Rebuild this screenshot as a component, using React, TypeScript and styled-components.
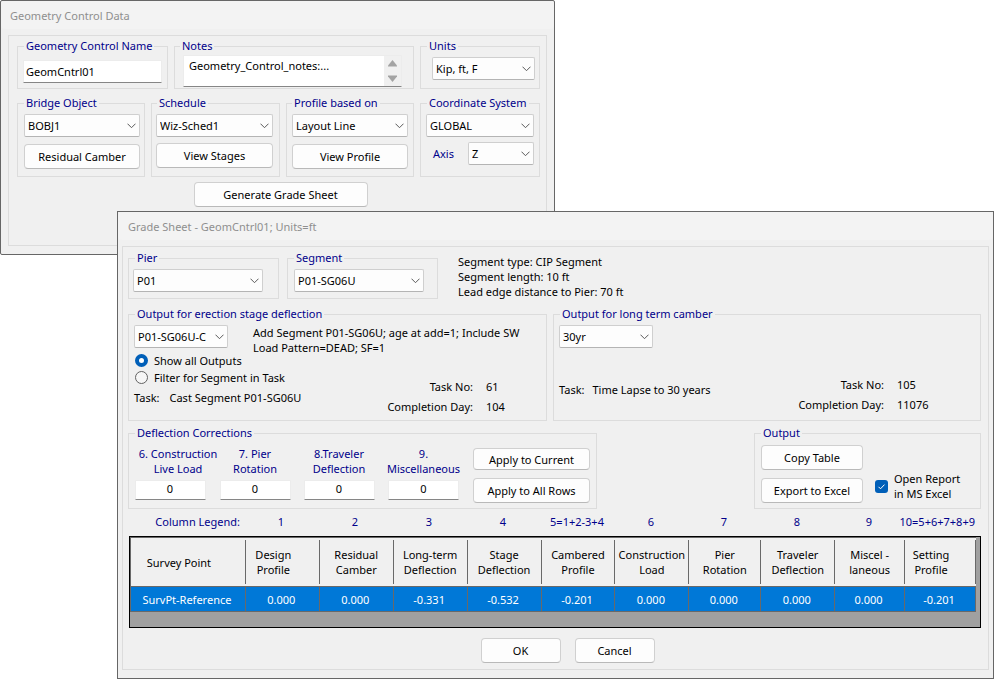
import React, { useId } from "react";
import styled, { createGlobalStyle, css } from "styled-components";

const colors = {
  face: "#f0f0f0",
  title: "#f3f3f3",
  titleText: "#8f8f8f",
  frame: "#666666",
  line: "#dcdcdc",
  navy: "#00008b",
  accent: "#005fb8",
  selected: "#0078d7",
  grid: "#696969",
};

const GlobalStyle = createGlobalStyle`
  *, *::before, *::after { box-sizing: border-box; }
  body {
    margin: 0;
    background: #ffffff;
    color: #000000;
    font: 11px/15px "Noto Sans", "Open Sans", sans-serif;
  }
  button, input, select, textarea {
    font: inherit;
    color: inherit;
    margin: 0;
  }
`;

/* ---------- desktop and windows ---------- */

const Desktop = styled.main`
  display: grid;
  grid-template-columns: 117px minmax(438px, 438fr) minmax(439px, 439fr);
  grid-template-rows: 211px auto;
`;

const Window = styled.section<{ $front?: boolean }>`
  grid-column: ${(p) => (p.$front ? "2 / 4" : "1 / 3")};
  grid-row: ${(p) => (p.$front ? "2" : "1 / 3")};
  align-self: start;
  z-index: ${(p) => (p.$front ? 1 : 0)};
  background: ${colors.face};
  border: 1px solid ${colors.frame};
  border-radius: ${(p) => (p.$front ? "0" : "2px")};
`;

const TitleBar = styled.h1<{ $inset: number }>`
  margin: 0;
  padding: 0 ${(p) => p.$inset}px;
  height: 28px;
  background: ${colors.title};
  border-radius: 4px;
  color: ${colors.titleText};
  font-size: 11px;
  font-weight: 400;
  line-height: 30px;
`;

const Panel = styled.form<{ $front?: boolean }>`
  margin: 6px ${(p) => (p.$front ? 4 : 7)}px 8px;
  padding: ${(p) => (p.$front ? "3px 7px 6px 5px" : "2px 6px 38px 8px")};
  border: 1px solid ${colors.line};
`;

/* ---------- group boxes ---------- */

const Group = styled.fieldset<{ $pad?: string }>`
  min-width: 0;
  margin: 0;
  padding: ${(p) => p.$pad ?? "3px 5px 7px 5px"};
  border: 1px solid ${colors.line};
`;

const Legend = styled.legend<{ $shift?: number }>`
  margin-left: ${(p) => p.$shift ?? 0}px;
  padding: 0 2px;
  color: ${colors.navy};
  line-height: 16px;
  white-space: nowrap;
`;

const Stack = styled.div<{ $gap?: number; $top?: number }>`
  display: flex;
  flex-direction: column;
  gap: ${(p) => p.$gap ?? 7}px;
  padding-top: ${(p) => p.$top ?? 0}px;
`;

/* ---------- controls ---------- */

const SelectBox = styled.div<{ $width?: number }>`
  position: relative;
  width: ${(p) => (p.$width ? `${p.$width}px` : "100%")};
  flex: none;

  svg {
    position: absolute;
    top: 9px;
    right: 4px;
    pointer-events: none;
  }
`;

const NativeSelect = styled.select`
  display: block;
  width: 100%;
  height: 23px;
  padding: 0 16px 0 3px;
  appearance: none;
  background: #fdfdfd;
  border: 1px solid #cfcfcf;
  border-bottom-color: #b4b4b4;
  border-radius: 2px;
  line-height: 20px;
`;

const Chevron = () => (
  <svg width="9" height="6" viewBox="0 0 9 6" fill="none" stroke="#5a5a5a" aria-hidden="true">
    <path d="M0.5 0.7 L4.5 4.7 L8.5 0.7" />
  </svg>
);

function Select(props: { label: string; value: string; width?: number; id?: string }) {
  return (
    <SelectBox $width={props.width}>
      <NativeSelect id={props.id} aria-label={props.label} defaultValue={props.value}>
        <option>{props.value}</option>
      </NativeSelect>
      <Chevron />
    </SelectBox>
  );
}

const Button = styled.button<{ $width?: number; $low?: boolean }>`
  width: ${(p) => (p.$width ? `${p.$width}px` : "auto")};
  height: ${(p) => (p.$low ? 22 : 25)}px;
  padding: 0;
  background: #fdfdfd;
  border: 1px solid #d0d0d0;
  border-bottom-color: #b9b9b9;
  border-radius: 4px;
  white-space: nowrap;
`;

const inputFace = css`
  display: block;
  width: 100%;
  background: #ffffff;
  border: 1px solid #ececec;
  border-bottom-color: #868686;
  border-radius: 1px;
`;

const TextInput = styled.input`
  ${inputFace}
  height: 23px;
  padding: 0 2px;
`;

const NumberInput = styled.input`
  ${inputFace}
  width: 71px;
  height: 20px;
  padding: 0 0 4px;
  text-align: center;
`;

const NotesBox = styled.div`
  ${inputFace}
  display: flex;
  height: 32px;

  textarea {
    flex: 1;
    min-width: 0;
    padding: 2px 5px;
    border: 0;
    resize: none;
    overflow: hidden;
    background: transparent;
  }
`;

const Scroller = styled.div`
  display: flex;
  flex-direction: column;
  width: 17px;
  background: ${colors.face};

  button {
    flex: 1;
    display: grid;
    place-items: center;
    padding: 0;
    border: 0;
    background: none;
  }
`;

/* ---------- geometry control layout ---------- */

const TopRow = styled.div`
  display: grid;
  grid-template-columns: 151fr 240fr 120fr;
  gap: 6px;
`;

const LowerRow = styled.div`
  display: grid;
  grid-template-columns: 128fr 129fr 128fr 120fr;
  gap: 6px;
  margin-top: 6px;
`;

const AxisRow = styled.div`
  display: flex;
  align-items: center;
  justify-content: space-between;
  padding-left: 7px;

  label {
    color: ${colors.navy};
  }
`;

const ButtonBar = styled.div<{ $front?: boolean }>`
  display: flex;
  justify-content: center;
  gap: 14px;
  margin-top: ${(p) => (p.$front ? 10 : 5)}px;
  padding-left: ${(p) => (p.$front ? 26 : 4)}px;
`;

/* ---------- grade sheet layout ---------- */

const PickRow = styled.div`
  display: grid;
  grid-template-columns: 151px 151px 1fr;
  gap: 8px;
`;

const Info = styled.p`
  margin: 0;
  padding: 4px 12px 0;
`;

const OutputRow = styled.div`
  display: grid;
  grid-template-columns: 419fr 428fr;
  gap: 6px;
  margin-top: 7px;
`;

const CorrectionRow = styled.div`
  display: grid;
  grid-template-columns: auto 227px;
  justify-content: space-between;
  margin-top: 4px;
`;

const StageTop = styled.div`
  display: flex;
  gap: 25px;
  height: 27px;

  p {
    margin: 0;
  }
`;

const StageBottom = styled.div`
  display: flex;
  justify-content: space-between;
  height: 65px;
`;

const Radio = styled.label`
  display: flex;
  align-items: center;
  gap: 6px;
  height: 17px;
  padding-left: 1px;

  input {
    appearance: none;
    width: 13px;
    height: 13px;
    border: 1px solid #626262;
    border-radius: 50%;
    background: #f6f6f6;
  }

  input:checked {
    border: 4px solid ${colors.accent};
    background: #ffffff;
  }
`;

const TaskLine = styled.div<{ $gap: number; $top: number }>`
  display: flex;
  gap: ${(p) => p.$gap}px;
  margin-top: ${(p) => p.$top}px;
  line-height: 16px;
`;

const Facts = styled.dl<{ $valueWidth: number; $lift?: boolean }>`
  display: grid;
  grid-template-columns: auto ${(p) => p.$valueWidth}px;
  column-gap: 13px;
  align-self: flex-end;
  margin: 0 0 ${(p) => (p.$lift ? 2 : 0)}px;
  line-height: 20px;

  dt {
    text-align: right;
  }

  dd {
    margin: 0;
  }
`;

const Corrections = styled.div`
  display: grid;
  grid-template-columns: 72px 98px 70px 99px 117px;
`;

const Correction = styled.label<{ $indent?: boolean }>`
  display: flex;
  flex-direction: column;
  align-items: center;
  gap: 4px;
  color: ${colors.navy};

  span {
    padding-left: ${(p) => (p.$indent ? 16 : 0)}px;
    text-align: center;
    white-space: pre;
  }

  input {
    color: #000000;
  }
`;

const ExportGrid = styled.div`
  display: flex;
  gap: 12px;
  align-items: flex-end;
`;

const Check = styled.label`
  display: flex;
  align-items: center;
  gap: 6px;
  padding-bottom: 2px;
`;

const Tick = styled.span`
  display: grid;

  input,
  svg {
    grid-area: 1 / 1;
    width: 13px;
    height: 13px;
  }

  input {
    appearance: none;
    border-radius: 3px;
    background: ${colors.accent};
  }

  svg {
    pointer-events: none;
  }
`;

const columnTemplate = "115fr repeat(6, 74fr) 72fr 74fr 70fr 71fr";

const LegendRow = styled.div`
  display: grid;
  grid-template-columns: ${columnTemplate};
  margin: 4px 6px 5px 1px;
  color: ${colors.navy};
  line-height: 18px;

  span {
    min-width: 0;
    display: flex;
    justify-content: center;
    white-space: nowrap;
  }

  span:first-child,
  span:last-child {
    justify-content: flex-end;
  }

  span:first-child {
    padding-right: 4px;
  }
`;

const TableWell = styled.div`
  margin-left: 1px;
  padding: 0 4px 15px 0;
  border: 1px solid #000000;
  background: #a0a0a0;
`;

const Table = styled.table`
  display: grid;
  border-top: 1px solid ${colors.grid};
  border-left: 1px solid ${colors.grid};

  thead,
  tbody {
    display: contents;
  }

  tr {
    display: grid;
    grid-template-columns: ${columnTemplate};
  }

  thead tr {
    background: ${colors.face};
    border-bottom: 1px solid ${colors.grid};
    padding: 2px 0;
  }

  tbody tr {
    background: ${colors.selected};
    border-bottom: 1px solid ${colors.grid};
  }
`;

const HeadCell = styled.th<{ $sortSpace?: boolean }>`
  display: grid;
  place-items: center;
  min-width: 0;
  height: 44px;
  padding: 0 ${(p) => (p.$sortSpace ? 18 : 0)}px 0 0;
  font-weight: 400;
  text-align: center;
  white-space: pre;
  border-right: 1px solid ${colors.grid};
`;

const Cell = styled.td`
  min-width: 0;
  padding: 0 2px 0 0;
  height: 24px;
  color: #ffffff;
  line-height: 25px;
  text-align: center;
  white-space: nowrap;
  border-right: 1px solid ${colors.grid};
`;

/* ---------- data ---------- */

const corrections = ["6. Construction\nLive Load", "7. Pier\nRotation", "8.Traveler\nDeflection", "9.\nMiscellaneous"];

const columns = [
  { legend: "Column Legend:", head: "Survey Point", value: "SurvPt-Reference" },
  { legend: "1", head: "Design\nProfile", value: "0.000" },
  { legend: "2", head: "Residual\nCamber", value: "0.000" },
  { legend: "3", head: "Long-term\nDeflection", value: "-0.331" },
  { legend: "4", head: "Stage\nDeflection", value: "-0.532" },
  { legend: "5=1+2-3+4", head: "Cambered\nProfile", value: "-0.201" },
  { legend: "6", head: "Construction\nLoad", value: "0.000" },
  { legend: "7", head: "Pier\nRotation", value: "0.000" },
  { legend: "8", head: "Traveler\nDeflection", value: "0.000" },
  { legend: "9", head: "Miscel -\nlaneous", value: "0.000" },
  { legend: "10=5+6+7+8+9", head: "Setting\nProfile", value: "-0.201" },
];

const sortSpaced = ["Survey Point", "Design\nProfile", "Setting\nProfile"];

/* ---------- windows ---------- */

function GeometryControl() {
  const axisId = useId();
  return (
    <Window aria-label="Geometry Control Data">
      <TitleBar $inset={9}>Geometry Control Data</TitleBar>
      <Panel onSubmit={(e) => e.preventDefault()}>
        <TopRow>
          <Group $pad="6px 5px 5px 5px">
            <Legend $shift={1}>Geometry Control Name</Legend>
            <TextInput aria-label="Geometry Control Name" defaultValue="GeomCntrl01" />
          </Group>
          <Group $pad="1px 11px 0 8px">
            <Legend $shift={-3}>Notes</Legend>
            <NotesBox>
              <textarea aria-label="Notes" defaultValue="Geometry_Control_notes:..." />
              <Scroller>
                <button type="button" aria-label="Scroll up">
                  <svg width="9" height="7" viewBox="0 0 9 7" aria-hidden="true">
                    <path d="M4.5 0 L9 5.5 V6.5 H0 V5.5 Z" fill="#a3a3a3" />
                  </svg>
                </button>
                <button type="button" aria-label="Scroll down">
                  <svg width="9" height="7" viewBox="0 0 9 7" aria-hidden="true">
                    <path d="M0 0.5 H9 V1.5 L4.5 7 L0 1.5 Z" fill="#a3a3a3" />
                  </svg>
                </button>
              </Scroller>
            </NotesBox>
          </Group>
          <Group $pad="3px 4px 0 11px">
            <Legend $shift={-5}>Units</Legend>
            <Select label="Units" value="Kip, ft, F" />
          </Group>
        </TopRow>
        <LowerRow>
          <Group $pad="3px 4px 7px 6px">
            <Legend>Bridge Object</Legend>
            <Stack>
              <Select label="Bridge Object" value="BOBJ1" />
              <Button type="button">Residual Camber</Button>
            </Stack>
          </Group>
          <Group $pad="3px 6px 7px 4px">
            <Legend $shift={1}>Schedule</Legend>
            <Stack $gap={6}>
              <Select label="Schedule" value="Wiz-Sched1" />
              <Button type="button">View Stages</Button>
            </Stack>
          </Group>
          <Group>
            <Legend>Profile based on</Legend>
            <Stack>
              <Select label="Profile based on" value="Layout Line" />
              <Button type="button">View Profile</Button>
            </Stack>
          </Group>
          <Group>
            <Legend $shift={1}>Coordinate System</Legend>
            <Stack $gap={5}>
              <Select label="Coordinate System" value="GLOBAL" />
              <AxisRow>
                <label htmlFor={axisId}>Axis</label>
                <Select id={axisId} label="Axis" value="Z" width={66} />
              </AxisRow>
            </Stack>
          </Group>
        </LowerRow>
        <ButtonBar>
          <Button type="button" $width={174}>
            Generate Grade Sheet
          </Button>
        </ButtonBar>
      </Panel>
    </Window>
  );
}

function GradeSheet() {
  return (
    <Window $front aria-label="Grade Sheet">
      <TitleBar $inset={10}>Grade Sheet - GeomCntrl01; Units=ft</TitleBar>
      <Panel $front onSubmit={(e) => e.preventDefault()}>
        <PickRow>
          <Group $pad="3px 5px 6px 4px">
            <Legend $shift={2}>Pier</Legend>
            <Select label="Pier" value="P01" width={130} />
          </Group>
          <Group $pad="3px 5px 6px 6px">
            <Legend>Segment</Legend>
            <Select label="Segment" value="P01-SG06U" width={130} />
          </Group>
          <Info>
            Segment type: CIP Segment
            <br />
            Segment length: 10 ft
            <br />
            Lead edge distance to Pier: 70 ft
          </Info>
        </PickRow>

        <OutputRow>
          <Group $pad="3px 5px 3px 5px">
            <Legend $shift={1}>Output for erection stage deflection</Legend>
            <StageTop>
              <Select label="Output for erection stage deflection" value="P01-SG06U-C" width={94} />
              <p>
                Add Segment P01-SG06U; age at add=1; Include SW
                <br />
                Load Pattern=DEAD; SF=1
              </p>
            </StageTop>
            <StageBottom>
              <div>
                <Radio>
                  <input type="radio" name="outputs" defaultChecked />
                  Show all Outputs
                </Radio>
                <Radio>
                  <input type="radio" name="outputs" />
                  Filter for Segment in Task
                </Radio>
                <TaskLine $gap={10} $top={4}>
                  <span>Task:</span>
                  <span>Cast Segment P01-SG06U</span>
                </TaskLine>
              </div>
              <Facts $valueWidth={55}>
                <dt>Task No:</dt>
                <dd>61</dd>
                <dt>Completion Day:</dt>
                <dd>104</dd>
              </Facts>
            </StageBottom>
          </Group>
          <Group $pad="3px 5px 3px 5px">
            <Legend $shift={1}>Output for long term camber</Legend>
            <StageTop>
              <Select label="Output for long term camber" value="30yr" width={94} />
            </StageTop>
            <StageBottom>
              <TaskLine $gap={8} $top={30}>
                <span>Task:</span>
                <span>Time Lapse to 30 years</span>
              </TaskLine>
              <Facts $valueWidth={78} $lift>
                <dt>Task No:</dt>
                <dd>105</dd>
                <dt>Completion Day:</dt>
                <dd>11076</dd>
              </Facts>
            </StageBottom>
          </Group>
        </OutputRow>

        <CorrectionRow>
          <Group $pad="5px 6px 4px 5px">
            <Legend $shift={1}>Deflection Corrections</Legend>
            <Corrections>
              {corrections.map((text, i) => (
                <Correction key={text} $indent={i === 0}>
                  <span>{text}</span>
                  <NumberInput inputMode="decimal" defaultValue="0" />
                </Correction>
              ))}
              <Stack $gap={8} $top={2}>
                <Button type="button" $low>
                  Apply to Current
                </Button>
                <Button type="button">Apply to All Rows</Button>
              </Stack>
            </Corrections>
          </Group>
          <Group $pad="4px 5px 5px 6px">
            <Legend>Output</Legend>
            <ExportGrid>
              <Stack $gap={8}>
                <Button type="button" $width={102}>
                  Copy Table
                </Button>
                <Button type="button" $width={102}>
                  Export to Excel
                </Button>
              </Stack>
              <Check>
                <Tick>
                  <input type="checkbox" defaultChecked />
                  <svg viewBox="0 0 13 13" fill="none" stroke="#ffffff" aria-hidden="true">
                    <path d="M3.5 6.8 L5.5 8.8 L9.5 4.6" />
                  </svg>
                </Tick>
                <span>
                  Open Report
                  <br />
                  in MS Excel
                </span>
              </Check>
            </ExportGrid>
          </Group>
        </CorrectionRow>

        <LegendRow>
          {columns.map((c) => (
            <span key={c.legend}>{c.legend}</span>
          ))}
        </LegendRow>
        <TableWell>
          <Table>
            <thead>
              <tr>
                {columns.map((c) => (
                  <HeadCell key={c.head} scope="col" $sortSpace={sortSpaced.includes(c.head)}>
                    {c.head}
                  </HeadCell>
                ))}
              </tr>
            </thead>
            <tbody>
              <tr>
                {columns.map((c) => (
                  <Cell key={c.head}>{c.value}</Cell>
                ))}
              </tr>
            </tbody>
          </Table>
        </TableWell>
        <ButtonBar $front>
          <Button type="submit" $width={80}>
            OK
          </Button>
          <Button type="button" $width={80}>
            Cancel
          </Button>
        </ButtonBar>
      </Panel>
    </Window>
  );
}

export default function App() {
  return (
    <>
      <GlobalStyle />
      <Desktop>
        <GeometryControl />
        <GradeSheet />
      </Desktop>
    </>
  );
}
